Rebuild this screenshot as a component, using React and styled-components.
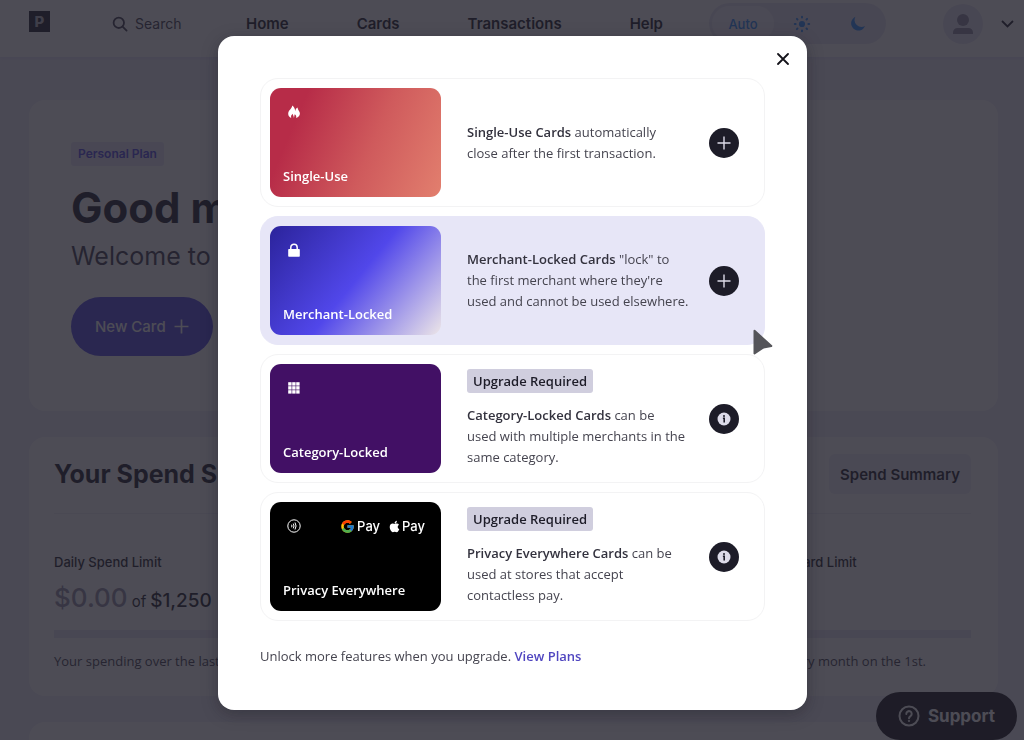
import React, { Fragment } from "react";
import styled, { createGlobalStyle } from "styled-components";
import { FcGoogle } from "react-icons/fc";
import { FaApple } from "react-icons/fa";

const GlobalStyle = createGlobalStyle`
  *, *::before, *::after { box-sizing: border-box; }
  body {
    margin: 0;
    background: #f0effa;
    color: #1d1c28;
    font-family: Inter, "Liberation Sans", sans-serif;
    font-size: 13px;
  }
  h1, h2, h3, p, ul { margin: 0; padding: 0; }
  button, input { font-family: inherit; }
  button { cursor: pointer; border: 0; padding: 0; }
`;

const textFont = `"Open Sans", "Noto Sans", sans-serif`;

/* The page behind the dialog does not scroll while the dialog is open. */
const Shell = styled.div`
  display: flex;
  flex-direction: column;
  height: 100vh;
  overflow: hidden;
`;

/* ---------- top bar ---------- */

const TopBar = styled.header`
  display: flex;
  flex: none;
  align-items: center;
  height: 57px;
  padding: 0 10px 10px 29px;
  background: #fff;
  box-shadow: 0 1px 4px rgba(80, 70, 229, 0.12);
`;

const Logo = styled.a`
  display: grid;
  place-items: center;
  width: 21px;
  height: 21px;
  margin: 0 62px 5px 0;
  background: #1d1c28;
  color: #b9b8c4;
  font-size: 15px;
  font-weight: 800;
  text-decoration: none;
`;

const SearchField = styled.label`
  display: flex;
  align-items: center;
  gap: 7px;
  width: 134px;
  color: #3d3b4c;
`;

const SearchInput = styled.input`
  flex: 1;
  min-width: 0;
  padding: 0;
  border: 0;
  outline: 0;
  background: none;
  font-size: 14px;
  color: #3d3b4c;
  &::placeholder { color: #3d3b4c; opacity: 1; }
`;

const Nav = styled.nav`
  display: flex;
  gap: 68px;
`;

const NavLink = styled.a`
  color: #1d1c28;
  font-size: 15px;
  font-weight: 600;
  line-height: 18px;
  text-decoration: none;
`;

const ThemeSwitch = styled.div`
  display: flex;
  align-items: center;
  height: 41px;
  margin-left: auto;
  padding-left: 3px;
  border-radius: 21px;
  background: #e7e6f4;
`;

const ThemeOption = styled.button`
  display: grid;
  place-items: center;
  width: ${(p) => (p.$active ? 62 : 56)}px;
  height: 35px;
  border-radius: 18px;
  background: ${(p) => (p.$active ? "#f6f5fc" : "transparent")};
  color: #2a8cff;
  font-size: 13px;
  font-weight: 500;
`;

const Account = styled.button`
  display: flex;
  align-items: center;
  gap: 18px;
  margin-left: 57px;
  background: none;
  color: #1d1c28;
`;

const Avatar = styled.span`
  display: grid;
  place-items: center;
  width: 40px;
  height: 40px;
  border-radius: 50%;
  background: #e7e6f4;
  color: #8f8da3;
`;

/* ---------- page ---------- */

const Page = styled.main`
  display: flex;
  flex: 1;
  flex-direction: column;
  gap: 26px;
  min-height: 0;
  padding: 43px 26px 0 29px;
`;

const Panel = styled.section`
  flex: none;
  border-radius: 16px;
  background: #fff;
  padding: ${(p) => p.$padding};
`;

const NextPanel = styled.section`
  flex: 1;
  border-radius: 16px 16px 0 0;
  background: #fff;
`;

const PlanTag = styled.span`
  display: inline-block;
  padding: 0 7px;
  border-radius: 3px;
  background: #e9e7fa;
  color: #5046e5;
  font-size: 12px;
  font-weight: 600;
  line-height: 24px;
`;

const Greeting = styled.h1`
  margin-top: 16px;
  font-size: 42px;
  font-weight: 700;
  line-height: 52px;
`;

const Welcome = styled.p`
  margin-top: 6px;
  color: #3d3b4c;
  font-size: 25px;
  font-weight: 400;
  line-height: 32px;
`;

const NewCardButton = styled.button`
  display: flex;
  align-items: center;
  gap: 8px;
  height: 59px;
  margin-top: 25px;
  padding: 0 24px;
  border-radius: 30px;
  background: #5046e5;
  color: #fff;
  font-size: 15px;
  font-weight: 500;
`;

const PanelHead = styled.div`
  display: flex;
  align-items: center;
  justify-content: space-between;
  padding-bottom: 19px;
  border-bottom: 1px solid #efeef6;
`;

const PanelTitle = styled.h2`
  font-size: 25px;
  font-weight: 700;
  line-height: 40px;
`;

const SoftButton = styled.button`
  height: 40px;
  padding: 0 11px;
  border-radius: 6px;
  background: #f0effa;
  color: #1d1c28;
  font-size: 15px;
  font-weight: 600;
`;

const Limits = styled.div`
  display: grid;
  grid-template-columns: repeat(3, 1fr);
  gap: 64px;
  padding-top: 39px;
`;

const LimitTitle = styled.h3`
  font-size: 13px;
  font-weight: 500;
  line-height: 18px;
`;

const Amount = styled.p`
  display: flex;
  align-items: baseline;
  gap: 4px;
  height: 36px;
  margin-top: 9px;
  font-size: 19px;
  font-weight: 500;
  line-height: 36px;
`;

const Spent = styled.span`
  color: #8f8da3;
  font-size: 26px;
`;

const Of = styled.span`
  font-size: 15px;
  font-weight: 400;
`;

const Track = styled.div`
  height: 8px;
  margin-top: 14px;
  background: #e7e6f4;
`;

const LimitNote = styled.p`
  margin-top: 14px;
  color: #3d3b4c;
  font-family: ${textFont};
  font-size: 13px;
  line-height: 18px;
  white-space: nowrap;
`;

const SupportButton = styled.button`
  position: fixed;
  right: 7px;
  bottom: 0;
  display: flex;
  align-items: center;
  gap: 8px;
  height: 48px;
  padding: 0 22px;
  border-radius: 24px;
  background: #14131a;
  color: #fff;
  font-size: 17px;
  font-weight: 700;
`;

/* ---------- dialog ---------- */

const Backdrop = styled.div`
  position: fixed;
  inset: 0;
  display: flex;
  align-items: flex-start;
  justify-content: center;
  padding: 36px 16px 16px 17px;
  background: rgba(32, 31, 43, 0.8);
`;

const Dialog = styled.div`
  position: relative;
  width: 100%;
  max-width: 589px;
  padding: 42px 42px 44px;
  border-radius: 16px;
  background: #fff;
  box-shadow: 0 4px 16px rgba(20, 19, 30, 0.35);
  font-family: ${textFont};
`;

const CloseButton = styled.button`
  position: absolute;
  top: 13px;
  right: 14px;
  display: grid;
  place-items: center;
  width: 20px;
  height: 20px;
  background: none;
  color: #14131a;
`;

const CardList = styled.ul`
  display: flex;
  flex-direction: column;
  gap: 9px;
  list-style: none;
`;

const CardOption = styled.li`
  position: relative;
  display: flex;
  align-items: center;
  gap: 26px;
  min-height: 129px;
  padding: 9px 25px 9px 9px;
  border: 1px solid ${(p) => (p.$selected ? "#e7e6f7" : "#f3f3f4")};
  border-radius: 18px;
  background: ${(p) => (p.$selected ? "#e7e6f7" : "#fff")};
`;

const CardArt = styled.div`
  display: flex;
  flex-direction: column;
  justify-content: space-between;
  flex: none;
  width: 171px;
  height: 109px;
  padding: 16px 16px 11px 13px;
  border-radius: 11px;
  background: ${(p) => p.$fill};
  color: #fff;
`;

const ArtTop = styled.div`
  display: flex;
  align-items: center;
  height: 16px;
  padding-left: 4px;
`;

const ArtName = styled.span`
  font-size: 13px;
  font-weight: 600;
  line-height: 20px;
`;

const PayMark = styled.span`
  display: flex;
  align-items: center;
  gap: ${(p) => p.$gap}px;
  margin-left: ${(p) => p.$left};
  font-family: Inter, sans-serif;
  font-size: 13px;
  font-weight: 500;
  line-height: 16px;
`;

const CardInfo = styled.div`
  flex: 1;
  min-width: 0;
`;

const UpgradeTag = styled.span`
  display: inline-block;
  margin-bottom: 12px;
  padding: 0 6px;
  border-radius: 3px;
  background: #d0cede;
  color: #1d1c28;
  font-size: 13px;
  font-weight: 600;
  line-height: 24px;
`;

const CardText = styled.p`
  color: #45444f;
  font-size: 13px;
  line-height: 21px;
  strong { color: #33323e; font-weight: 600; }
`;

const RoundButton = styled.button`
  display: grid;
  place-items: center;
  flex: none;
  width: 30px;
  height: 30px;
  margin-left: -10px;
  border-radius: 50%;
  background: #1d1c28;
  color: #dddbe9;
`;

const Footer = styled.p`
  margin-top: 25px;
  color: #45444f;
  font-size: 13px;
  line-height: 20px;
`;

const PlansLink = styled.a`
  color: #5046c0;
  font-weight: 600;
  text-decoration: none;
`;

const Pointer = styled.svg`
  position: absolute;
  right: -9px;
  bottom: -11px;
`;

/* ---------- icons ---------- */

const SearchIcon = () => (
  <svg width="16" height="16" viewBox="0 0 16 16" fill="none" stroke="currentColor" strokeWidth="1.8">
    <circle cx="6.8" cy="6.8" r="5.2" />
    <path d="M10.6 10.6 14.6 14.6" strokeLinecap="round" />
  </svg>
);

const SunIcon = () => (
  <svg width="18" height="18" viewBox="0 0 18 18" fill="currentColor">
    <circle cx="9" cy="9" r="3.1" />
    {[0, 45, 90, 135, 180, 225, 270, 315].map((a) => (
      <rect key={a} x="8" y="0.8" width="2" height="2.8" rx="1" transform={`rotate(${a} 9 9)`} />
    ))}
  </svg>
);

const MoonIcon = () => (
  <svg width="16" height="16" viewBox="0 0 16 16" fill="currentColor">
    <path d="M5.4 0.8a7.2 7.2 0 1 0 9.6 9.3A7 7 0 0 1 5.4 0.8z" />
  </svg>
);

const PersonIcon = () => (
  <svg width="20" height="20" viewBox="0 0 20 20" fill="currentColor">
    <circle cx="10" cy="6" r="6" />
    <path d="M0 20v-1.500a4.500 4.500 0 0 1 4.500-4.500h11a4.500 4.500 0 0 1 4.500 4.500V20z" />
  </svg>
);

const ChevronIcon = () => (
  <svg width="13" height="8" viewBox="0 0 13 8" fill="none" stroke="currentColor" strokeWidth="1.8">
    <path d="m1 1 5.5 5.5L12 1" />
  </svg>
);

const PlusIcon = ({ size, weight }) => (
  <svg width={size} height={size} viewBox="0 0 14 14" fill="none" stroke="currentColor" strokeWidth={weight}>
    <path d="M7 0.5v13M0.5 7h13" />
  </svg>
);

const InfoIcon = () => (
  <svg width="14" height="14" viewBox="0 0 14 14">
    <circle cx="7" cy="7" r="6.5" fill="currentColor" />
    <path d="M5.900 6.200h1.300v4.300" fill="none" stroke="#1d1c28" strokeWidth="1.600" />
    <circle cx="7" cy="3.900" r="1" fill="#1d1c28" />
  </svg>
);

const CloseIcon = () => (
  <svg width="12" height="12" viewBox="0 0 12 12" fill="none" stroke="currentColor" strokeWidth="1.8" strokeLinecap="round">
    <path d="m1 1 10 10M11 1 1 11" />
  </svg>
);

const FlameIcon = () => (
  <svg width="14" height="14" viewBox="0 0 14 14" fill="currentColor">
    <path d="M5.200 0.600C5.300 3.600 1.200 5.300 1.200 8.700c0 2 1.200 3.500 3 4.200-0.500-1.700 0.200-2.900 1.400-4.100 0.300 1.500 1.200 2.600 1.300 4.100 0.600-1.400 0.300-2.600 0.900-3.600 1.200 1 1.700 2.100 1.400 3.600 2.200-0.600 3.700-2.200 3.700-4.400 0-2.400-2.100-3.300-2.400-6.100C9 3.200 8.400 4.600 8.300 6.200 7.800 3.800 7.100 1.700 5.200 0.600z" />
  </svg>
);

const LockIcon = () => (
  <svg width="14" height="14" viewBox="0 0 14 14">
    <rect x="1.200" y="6" width="11.600" height="7.800" rx="0.800" fill="currentColor" />
    <path d="M3.800 6.500V4.400a3.200 3.200 0 0 1 6.400 0v2.100" fill="none" stroke="currentColor" strokeWidth="1.500" />
  </svg>
);

const GridIcon = () => (
  <svg width="14" height="14" viewBox="0 0 14 14" fill="currentColor">
    {[0, 1, 2].map((r) =>
      [0, 1, 2].map((c) => (
        <rect key={`${r}${c}`} x={1.2 + c * 4} y={1.2 + r * 4} width="3.400" height="3.400" />
      ))
    )}
  </svg>
);

const ContactlessIcon = () => (
  <svg width="14" height="14" viewBox="0 0 14 14" fill="none" stroke="currentColor" strokeWidth="1">
    <circle cx="7" cy="7" r="6.200" />
    <path d="M4.600 5.700q0.700 1.300 0 2.600M6.300 4.600q1.400 2.400 0 4.800M8 3.500q2.100 3.500 0 7" />
  </svg>
);

const HelpIcon = () => (
  <svg width="22" height="22" viewBox="0 0 22 22" fill="none" stroke="currentColor" strokeWidth="2">
    <circle cx="11" cy="11" r="9.500" />
    <path d="M8.300 8.900a2.700 2.700 0 1 1 4.200 2.200c-1 .7-1.500 1.100-1.500 2.200" strokeLinecap="round" />
    <circle cx="11" cy="15.900" r="0.700" fill="currentColor" strokeWidth="1" />
  </svg>
);

/* ---------- data ---------- */

const CARDS = [
  {
    name: "Single-Use",
    icon: <FlameIcon />,
    fill: "linear-gradient(113deg, #b72c48 18%, #cf5a5c 58%, #e27f6e 100%)",
    title: "Single-Use Cards",
    lines: ["automatically", "close after the first transaction."],
  },
  {
    name: "Merchant-Locked",
    icon: <LockIcon />,
    fill: "linear-gradient(129deg, #2b239b 0%, #5147ea 50%, #e6dfe8 98%)",
    title: "Merchant-Locked Cards",
    lines: ["\"lock\" to", "the first merchant where they're", "used and cannot be used elsewhere."],
    selected: true,
  },
  {
    name: "Category-Locked",
    icon: <GridIcon />,
    fill: "#421065",
    title: "Category-Locked Cards",
    lines: ["can be", "used with multiple merchants in the", "same category."],
    upgrade: true,
  },
  {
    name: "Privacy Everywhere",
    icon: <ContactlessIcon />,
    fill: "#000",
    title: "Privacy Everywhere Cards",
    lines: ["can be", "used at stores that accept", "contactless pay."],
    upgrade: true,
    pay: true,
  },
];

const LIMITS = [
  { title: "Daily Spend Limit", total: "$1,250", note: "Your spending over the last 24 hours." },
  { title: "Monthly Spend Limit", total: "$1,250", note: "Your spending over the last 30 days." },
  { title: "Monthly New Card Limit", note: "Limit resets every month on the 1st." },
];

const CardRow = ({ card }) => (
  <CardOption $selected={card.selected}>
    <CardArt $fill={card.fill}>
      <ArtTop>
        {card.icon}
        {card.pay && (
          <>
            <PayMark $left="auto" $gap={2}><FcGoogle size={15} />Pay</PayMark>
            <PayMark $left="8px" $gap={1}><FaApple size={13} />Pay</PayMark>
          </>
        )}
      </ArtTop>
      <ArtName>{card.name}</ArtName>
    </CardArt>
    <CardInfo>
      {card.upgrade && <UpgradeTag>Upgrade Required</UpgradeTag>}
      <CardText>
        <strong>{card.title}</strong>{" "}
        {card.lines.map((line, i) => (
          <Fragment key={line}>{i > 0 && <br />}{line}</Fragment>
        ))}
      </CardText>
    </CardInfo>
    <RoundButton aria-label={card.upgrade ? `About ${card.title}` : `Add ${card.title}`}>
      {card.upgrade ? <InfoIcon /> : <PlusIcon size={14} weight={1.4} />}
    </RoundButton>
    {card.selected && (
      <Pointer width="21" height="26" viewBox="0 0 21 26" aria-hidden="true">
        <path d="M2.500 1.800 19.300 17 11.500 18.500 2.500 24.500z" fill="#55555a" stroke="#55555a" strokeWidth="2" strokeLinejoin="round" />
      </Pointer>
    )}
  </CardOption>
);

export default function App() {
  return (
    <>
      <GlobalStyle />
      <Shell>
        <TopBar>
          <Logo href="#">P</Logo>
          <SearchField>
            <SearchIcon />
            <SearchInput placeholder="Search" aria-label="Search" />
          </SearchField>
          <Nav>
            {["Home", "Cards", "Transactions", "Help"].map((item) => (
              <NavLink key={item} href="#">{item}</NavLink>
            ))}
          </Nav>
          <ThemeSwitch>
            <ThemeOption $active>Auto</ThemeOption>
            <ThemeOption aria-label="Light"><SunIcon /></ThemeOption>
            <ThemeOption aria-label="Dark"><MoonIcon /></ThemeOption>
          </ThemeSwitch>
          <Account aria-label="Account">
            <Avatar><PersonIcon /></Avatar>
            <ChevronIcon />
          </Account>
        </TopBar>

        <Page>
          <Panel $padding="42px 42px 55px">
            <PlanTag>Personal Plan</PlanTag>
            <Greeting>Good morning</Greeting>
            <Welcome>Welcome to your account</Welcome>
            <NewCardButton>New Card <PlusIcon size={15} weight={1.6} /></NewCardButton>
          </Panel>

          <Panel $padding="17px 27px 26px 25px">
            <PanelHead>
              <PanelTitle>Your Spend Summary</PanelTitle>
              <SoftButton>Spend Summary</SoftButton>
            </PanelHead>
            <Limits>
              {LIMITS.map((limit) => (
                <div key={limit.title}>
                  <LimitTitle>{limit.title}</LimitTitle>
                  <Amount>
                    <Spent>{limit.total ? "$0.00" : "0"}</Spent>
                    {limit.total && <><Of>of</Of>{limit.total}</>}
                  </Amount>
                  <Track />
                  <LimitNote>{limit.note}</LimitNote>
                </div>
              ))}
            </Limits>
          </Panel>

          <NextPanel />
        </Page>

        <SupportButton><HelpIcon />Support</SupportButton>
      </Shell>

      <Backdrop>
        <Dialog role="dialog" aria-modal="true" aria-label="Choose a card type">
          <CloseButton aria-label="Close"><CloseIcon /></CloseButton>
          <CardList>
            {CARDS.map((card) => <CardRow key={card.name} card={card} />)}
          </CardList>
          <Footer>
            Unlock more features when you upgrade. <PlansLink href="#">View Plans</PlansLink>
          </Footer>
        </Dialog>
      </Backdrop>
    </>
  );
}
